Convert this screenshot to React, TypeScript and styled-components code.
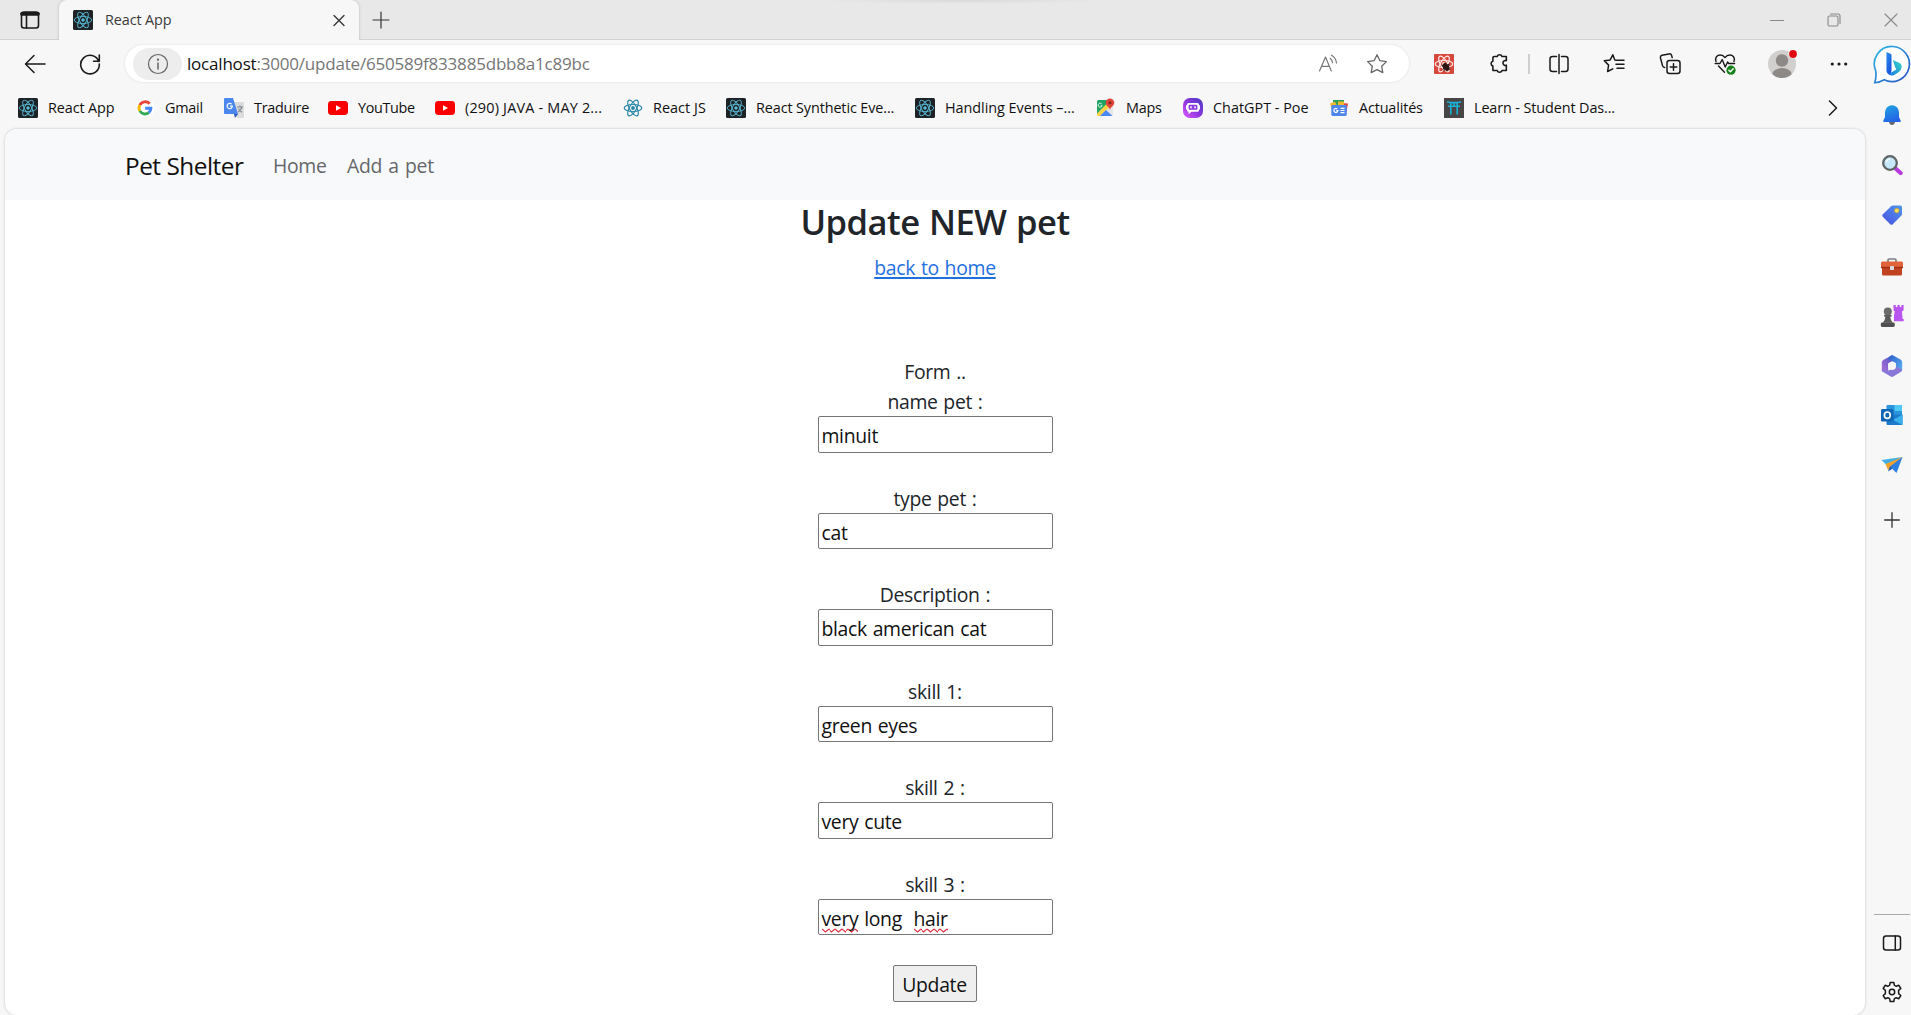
import React from "react";
import styled, { createGlobalStyle, css } from "styled-components";

const GlobalStyle = createGlobalStyle`
  *, *::before, *::after { box-sizing: border-box; }
  html, body { margin: 0; padding: 0; }
  body {
    width: 100vw;
    height: 100vh;
    overflow: hidden;
    background: #f7f7f7;
    font-family: "Open Sans", "Noto Sans", "Liberation Sans", sans-serif;
  }
  svg { display: block; flex: none; }
`;

const Window = styled.div`
  display: flex;
  flex-direction: column;
  width: 100vw;
  height: 100vh;
  background: #f7f7f7;
`;

/* ---------- tab strip ---------- */

const TabStrip = styled.div`
  display: flex;
  align-items: stretch;
  height: 40px;
  flex: none;
  background:
    radial-gradient(ellipse 142px 4px at 962px 0, #d9d9d9, transparent) no-repeat,
    #e8e8e8;
  box-shadow: inset 0 -1px 0 #d3d3d3;
`;

const StripButton = styled.div<{ $w: number; $indent?: number }>`
  display: flex;
  align-items: center;
  justify-content: center;
  width: ${(p) => p.$w}px;
  padding: 0 0 1px ${(p) => p.$indent ?? 0}px;
`;

const Tab = styled.div`
  position: relative;
  display: flex;
  align-items: center;
  width: 300px;
  padding: 0 13px 1px 14px;
  background: #f7f7f7;
  border-radius: 8px 8px 0 0;
  box-shadow: 0 0 3px rgba(0, 0, 0, 0.22);
  clip-path: inset(0 -4px 0 -4px);
`;

const TabTitle = styled.span`
  flex: 1;
  margin-left: 12px;
  font-size: 14.4px;
  letter-spacing: -0.1px;
  color: #3b3b3b;
`;

const WindowButtons = styled.div`
  display: flex;
  margin-left: auto;
`;

/* ---------- frame below the tabs ---------- */

const Frame = styled.div`
  display: flex;
  flex: 1;
  min-height: 0;
`;

const MainColumn = styled.div`
  display: flex;
  flex-direction: column;
  flex: 1;
  min-width: 0;
`;

const Toolbar = styled.div`
  display: flex;
  align-items: center;
  height: 48px;
  padding-bottom: 1px;
  flex: none;
`;

const ToolCell = styled.div<{ $w: number }>`
  display: flex;
  align-items: center;
  justify-content: center;
  width: ${(p) => p.$w}px;
  flex: none;
`;

const AddressBar = styled.div`
  display: flex;
  align-items: center;
  flex: 1;
  height: 37px;
  margin: 0 6px 0 14px;
  padding: 0 14px 0 8px;
  background: #fff;
  border-radius: 19px;
  box-shadow: 0 0 3px rgba(0, 0, 0, 0.1);
`;

const InfoPill = styled.div`
  display: flex;
  align-items: center;
  justify-content: center;
  width: 49px;
  height: 32px;
  border-radius: 16px;
  background: #ededed;
`;

const Url = styled.span`
  flex: 1;
  margin-left: 5px;
  padding-bottom: 1px;
  font-size: 17px;
  letter-spacing: -0.2px;
  color: #767676;
  b { font-weight: 400; color: #111; }
`;

const ToolDivider = styled.div`
  width: 2px;
  height: 20px;
  margin: 0 1px;
  background: #cfcfcf;
`;

const Bookmarks = styled.div`
  display: flex;
  align-items: center;
  height: 41px;
  padding: 0 13px 2px 18px;
  flex: none;
`;

const BookmarkItem = styled.div<{ $w: number; $track: number }>`
  display: flex;
  align-items: center;
  gap: 10px;
  width: ${(p) => p.$w}px;
  flex: none;
  white-space: nowrap;
  font-size: 14.4px;
  letter-spacing: ${(p) => p.$track}px;
  color: #111;
  span { padding-bottom: 1px; }
`;

const MoreBookmarks = styled.div`
  display: flex;
  margin-left: auto;
  padding-right: 14px;
`;

const PageArea = styled.div`
  display: flex;
  flex: 1;
  min-height: 0;
  padding-left: 5px;
`;

const Page = styled.div`
  display: flex;
  flex-direction: column;
  flex: 1;
  overflow: hidden;
  background: #fff;
  border-radius: 12px;
  box-shadow: 0 0 3px rgba(0, 0, 0, 0.22);
`;

/* ---------- page content ---------- */

const Navbar = styled.nav`
  display: flex;
  align-items: center;
  height: 71px;
  flex: none;
  padding: 1px 0 0 120px;
  background: #f8f9fb;
`;

const Brand = styled.span`
  width: 148px;
  font-size: 24.4px;
  letter-spacing: -0.5px;
  color: #111;
`;

const NavLink = styled.span<{ $w: number }>`
  width: ${(p) => p.$w}px;
  padding-top: 1px;
  font-size: 19.4px;
  letter-spacing: -0.3px;
  word-spacing: 1.5px;
  color: #65676a;
`;

const Content = styled.main`
  display: flex;
  flex-direction: column;
  align-items: center;
  color: #212529;
  font-size: 19.4px;
  line-height: 30px;
  letter-spacing: -0.33px;
  word-spacing: 1.1px;
`;

const Heading = styled.h2`
  margin: 0;
  padding-top: 1px;
  height: 53px;
  font-size: 34.5px;
  line-height: 42px;
  font-weight: 600;
  letter-spacing: -0.5px;
`;

const BackLink = styled.span`
  color: #1f6fe0;
  text-decoration: underline;
  text-decoration-thickness: 2px;
  text-underline-offset: 2px;
`;

const FormTitle = styled.div`
  margin-top: 74px;
`;

const Field = styled.label`
  display: flex;
  flex-direction: column;
  align-items: center;
  height: 96.5px;
`;

const FieldLabel = styled.span`
  height: 29px;
`;

const boxed = css`
  border: 1px solid #767676;
  border-radius: 2px;
  color: #111;
`;

const FieldBox = styled.div`
  ${boxed}
  width: 235px;
  height: 36.5px;
  padding: 4px 3px 0;
  background: #fff;
  white-space: pre;
`;

const Misspelt = styled.span`
  display: inline-block;
  height: 29px;
  background: url("data:image/svg+xml,%3Csvg xmlns='http://www.w3.org/2000/svg' width='6.6' height='5' viewBox='0 0 6.6 5'%3E%3Cpath d='M0 1 L3.3 4 L6.6 1' fill='none' stroke='%23e03040' stroke-width='1.1'/%3E%3C/svg%3E") repeat-x 0 100%;
`;

const SubmitButton = styled.div`
  ${boxed}
  width: 84px;
  height: 37px;
  margin: -1px 1px 0 0;
  padding-top: 4px;
  background: #efefef;
  text-align: center;
`;

/* ---------- sidebar ---------- */

const Sidebar = styled.aside`
  display: flex;
  flex-direction: column;
  align-items: center;
  width: 46px;
  flex: none;
  padding: 0 0 0 8px;
`;

const SideCell = styled.div<{ $h: number }>`
  display: flex;
  align-items: center;
  justify-content: center;
  height: ${(p) => p.$h}px;
  flex: none;
`;

const SideFooter = styled.div`
  display: flex;
  flex-direction: column;
  align-items: center;
  width: 36px;
  margin-top: auto;
  padding-top: 2px;
  border-top: 1px solid #a9a9a9;
`;

/* ---------- icons ---------- */

type LineProps = {
  w?: number;
  h?: number;
  color?: string;
  sw?: number;
  box?: string;
  children: React.ReactNode;
};

const Line = ({ w = 20, h = w, color = "#1a1a1a", sw = 1.4, box, children }: LineProps) => (
  <svg
    width={w}
    height={h}
    viewBox={box ?? `0 0 ${w} ${h}`}
    fill="none"
    stroke={color}
    strokeWidth={sw}
    strokeLinecap="round"
    strokeLinejoin="round"
  >
    {children}
  </svg>
);

const Orbits = ({ color, sw = 1 }: { color: string; sw?: number }) => (
  <g fill="none" stroke={color} strokeWidth={sw}>
    <ellipse cx="10" cy="10" rx="8.8" ry="3.5" />
    <ellipse cx="10" cy="10" rx="8.8" ry="3.5" transform="rotate(60 10 10)" />
    <ellipse cx="10" cy="10" rx="8.8" ry="3.5" transform="rotate(120 10 10)" />
    <circle cx="10" cy="10" r="1.3" fill={color} />
  </g>
);

const ReactDark = () => (
  <svg width="20" height="20" viewBox="0 0 20 20">
    <rect width="20" height="20" rx="1.5" fill="#1d2226" />
    <Orbits color="#58b9d3" sw={0.9} />
  </svg>
);

const ReactLight = () => (
  <svg width="20" height="20" viewBox="0 0 20 20">
    <Orbits color="#2b88a6" sw={1.2} />
  </svg>
);

const ReactDebug = () => (
  <svg width="20" height="20" viewBox="0 0 20 20">
    <rect width="20" height="20" rx="1" fill="#d8473c" />
    <Orbits color="#ffe9e4" sw={1.2} />
    <g stroke="#2a1512" strokeWidth="1" strokeLinecap="round">
      <ellipse cx="12" cy="12.8" rx="2.4" ry="3.6" transform="rotate(-40 12 12.8)" fill="#2a1512" />
      <path d="M8 11.5l8 4M10 17l1-8M9 15l6-5M13 17l2-6" />
    </g>
  </svg>
);

const Google = () => (
  <svg width="20" height="20" viewBox="0 0 20 20">
    <circle cx="10" cy="10" r="9.5" fill="#fff" />
    <g fill="none" strokeWidth="2.9">
      <path d="M14.6 5.7A6 6 0 0 0 4.8 7.1" stroke="#ea4335" />
      <path d="M4.8 7.1a6 6 0 0 0 0 5.8" stroke="#fbbc05" />
      <path d="M4.8 12.9a6 6 0 0 0 9 1.7" stroke="#34a853" />
      <path d="M13.8 14.6a6 6 0 0 0 2.1-4.4H10.2" stroke="#4285f4" />
    </g>
  </svg>
);

const Translate = () => (
  <svg width="20" height="20" viewBox="0 0 20 20">
    <path d="M9 4h10a1 1 0 0 1 1 1v14a1 1 0 0 1-1 1h-6z" fill="#dcdcdc" />
    <path d="M13 9h6M16 7.6V9M18 9c-.7 2.6-2.3 4.2-4 5M14.4 10.8c.8 1.6 2 2.7 3.6 3.4" stroke="#7c8791" strokeWidth="1.1" fill="none" />
    <path d="M1 0h8l5 16H1a1 1 0 0 1-1-1V1a1 1 0 0 1 1-1z" fill="#4b87ee" />
    <path d="M10 16h4l-3 4z" fill="#2f5bbd" />
    <path d="M7.6 6.2A2.6 2.6 0 1 0 8.3 8.2H5.9" stroke="#fff" strokeWidth="1.2" fill="none" />
  </svg>
);

const YouTube = () => (
  <svg width="20" height="20" viewBox="0 0 20 20">
    <rect x="0" y="3" width="20" height="14" rx="3.4" fill="#f80000" />
    <path d="M8 7.2v5.6l5-2.8z" fill="#fff" />
  </svg>
);

const Maps = () => (
  <svg width="20" height="20" viewBox="0 0 20 20">
    <clipPath id="maps-tile"><rect x="1" y="2" width="16" height="16" rx="1.5" /></clipPath>
    <g clipPath="url(#maps-tile)">
      <rect x="1" y="2" width="16" height="16" fill="#e6e6e6" />
      <path d="M1 2h12v3L1 17z" fill="#1fa463" />
      <path d="M1 15.5L11.5 5l3 3L4.500 18H1z" fill="#fbd24a" />
      <path d="M4 18l6-6 6.500 6z" fill="#4a89f3" />
    </g>
    <path d="M5.900 6.200a2 2 0 1 0 .2 1.500H4.600" stroke="#fff" strokeWidth=".9" fill="none" />
    <path d="M14 .5a4.300 4.300 0 0 0-4.300 4.300c0 3 3.500 3.700 4.300 7.200.8-3.500 4.300-4.200 4.300-7.200A4.300 4.300 0 0 0 14 .5z" fill="#e0463a" />
    <circle cx="14" cy="4.700" r="1.500" fill="#8c1f16" />
  </svg>
);

const Poe = () => (
  <svg width="20" height="20" viewBox="0 0 20 20">
    <defs>
      <linearGradient id="poe" x1="1" y1="0" x2="0" y2="1">
        <stop offset="0" stopColor="#4a3cc4" />
        <stop offset=".5" stopColor="#8a35dd" />
        <stop offset="1" stopColor="#e05bff" />
      </linearGradient>
    </defs>
    <rect width="20" height="20" rx="7" fill="url(#poe)" />
    <path d="M5.500 5h9a1.500 1.500 0 0 1 1.500 1.500v.8h1v4.200h-1v.8a1.500 1.500 0 0 1-1.500 1.500H8.500L5.500 16.200v-2.400A1.500 1.500 0 0 1 4 12.300v-.8H3V7.300h1v-.8A1.500 1.500 0 0 1 5.500 5z" fill="#fff" />
    <rect x="5.600" y="6.800" width="8.800" height="5" rx="1.200" fill="#8b3be0" />
    <path d="M8 8.300v2M12 8.300v2" stroke="#fff" strokeWidth="1.500" />
  </svg>
);

const News = () => (
  <svg width="20" height="20" viewBox="0 0 20 20">
    <path d="M4 2h11v7H4z" fill="#2f9e58" />
    <path d="M1 5.500l5-1.800 3 6-6 2z" fill="#f2b92c" />
    <path d="M12 5l7 .6-1.500 8L12 12z" fill="#e8453c" />
    <path d="M9 3.500h6v4H9z" fill="#f2b92c" />
    <rect x="2.300" y="7" width="15.500" height="11" rx="1.400" fill="#4f86ec" />
    <path d="M8.300 11a2 2 0 1 0 .6 1.700H7.200M11.500 10.400H15.500M11.500 12.500H15.500M11.500 14.600H15.500" stroke="#fff" strokeWidth="1.200" fill="none" />
  </svg>
);

const Torii = () => (
  <svg width="20" height="20" viewBox="0 0 20 20">
    <rect width="20" height="20" fill="#474545" />
    <path d="M3 4q7 1.200 14 0M4 8.300h12M6.800 4.800V16.500M13.200 4.800V16.500M10 5v3" stroke="#19b1d8" strokeWidth="1.600" fill="none" />
  </svg>
);

const Puzzle = () => (
  <Line w={21} sw={1.5} box="0 0 20 20">
    <path d="M5 3.400h2.800a2.400 2.400 0 0 1 4.600 0h4.100v4a2.200 2.200 0 0 0-3.100 2.700 2.200 2.200 0 0 0 3.100 1.500v5h-4.100a2.400 2.400 0 0 1-4.600 0H3.700v-4.200a2.400 2.400 0 0 1 0-4.600V4.700q0-1.300 1.300-1.300z" />
  </Line>
);

const Heart = () => (
  <Line w={22} h={22} sw={1.4}>
    <path d="M2 8.600C.6 4.500 3.200 2 6.200 2 8.400 2 10 3.200 11 4.600 12 3.200 13.600 2 15.800 2c3 0 5.600 2.500 4.200 6.600M4.500 13l6 6.300" />
    <path d="M1.200 10.500H6l2.200-4 3 7.500 2.400-5 1 1.500h6" />
    <circle cx="17" cy="17.200" r="4.600" fill="#14801a" stroke="none" />
    <path d="M14.900 17.300l1.500 1.500 2.800-3" stroke="#fff" />
  </Line>
);

const Avatar = () => (
  <svg width="30" height="30" viewBox="0 0 30 30" overflow="visible">
    <clipPath id="avatar"><circle cx="15" cy="15" r="14" /></clipPath>
    <circle cx="15" cy="15" r="14" fill="#d2d0ce" />
    <g clipPath="url(#avatar)" fill="#8c8987">
      <circle cx="15" cy="11.500" r="6.200" />
      <ellipse cx="15" cy="26" rx="10" ry="7" />
    </g>
    <circle cx="26" cy="5" r="4.600" fill="#f7f7f7" />
    <circle cx="26" cy="5" r="3.900" fill="#e00b12" />
  </svg>
);

const Bing = () => (
  <svg width="38" height="39" viewBox="0 0 38 40">
    <defs>
      <linearGradient id="bing-ring" x1="0" y1="0" x2="1" y2="1">
        <stop offset="0" stopColor="#29b9e6" />
        <stop offset="1" stopColor="#2a50c4" />
      </linearGradient>
      <linearGradient id="bing-b" x1="0" y1="0" x2=".6" y2="1">
        <stop offset="0" stopColor="#2a8ff0" />
        <stop offset="1" stopColor="#1a52d8" />
      </linearGradient>
      <linearGradient id="bing-bowl" x1="1" y1="0" x2="0" y2="1">
        <stop offset="0" stopColor="#35dcc0" />
        <stop offset="1" stopColor="#1c74ea" />
      </linearGradient>
    </defs>
    <path d="M19.500 1.500a18 18 0 1 1-8.500 34.200Q6 38.600 1.300 38.700 3.200 33 2.300 26.500A18 18 0 0 1 19.500 1.500z" fill="#fff" stroke="url(#bing-ring)" strokeWidth="1.700" />
    <path d="M13.300 7.300l4.200 1.600q1 .4 1 1.500v15.500l-1 4.500q-4.200-.3-4.200-4.400z" fill="url(#bing-b)" />
    <path d="M19.800 15.500l6.400 2.600q3 1.300 2.700 5-.5 3.500-3.500 5.200l-4.200 2.500q-3.400 1.400-6-.8l8.200-4.900-1.500-3.300z" fill="url(#bing-bowl)" />
  </svg>
);

const Bell = () => (
  <svg width="20" height="20" viewBox="0 0 20 20">
    <defs>
      <linearGradient id="bell" x1="0" y1="0" x2=".4" y2="1">
        <stop offset="0" stopColor="#20a5e2" /><stop offset="1" stopColor="#2465e6" />
      </linearGradient>
    </defs>
    <path d="M7 17h6q-.5 3-3 3t-3-3z" fill="#686868" />
    <path d="M10 .3A7 7 0 0 1 17 7v5l1.800 4q.2 1-.8 1H2q-1 0-.8-1L3 12V7A7 7 0 0 1 10 .3z" fill="url(#bell)" />
  </svg>
);

const Magnifier = () => (
  <svg width="22" height="22" viewBox="0 0 22 22">
    <path d="M14 14l5.600 5" stroke="#b93be0" strokeWidth="4.200" strokeLinecap="round" />
    <circle cx="9" cy="9" r="6.800" fill="#c6e8f8" stroke="#5f6467" strokeWidth="2.300" />
    <path d="M5.500 8q.8-2.700 3.500-3" stroke="#fff" strokeWidth="1.200" fill="none" />
  </svg>
);

const Tag = () => (
  <svg width="22" height="22" viewBox="0 0 22 22">
    <defs>
      <linearGradient id="tag" x1="1" y1="0" x2="0" y2="1">
        <stop offset="0" stopColor="#4e97ee" /><stop offset="1" stopColor="#4a4fe0" />
      </linearGradient>
    </defs>
    <path d="M12 1.500h7.500q1.500 0 1.500 1.500v7q0 1-.8 1.800l-8.400 8.400q-1.300 1.200-2.600 0l-7.400-7.400q-1.200-1.300 0-2.500L10.200 2.200q.8-.7 1.800-.7z" fill="url(#tag)" />
    <circle cx="15.800" cy="6.600" r="2.300" fill="#f8df62" stroke="#c59d30" strokeWidth=".8" />
  </svg>
);

const Toolbox = () => (
  <svg width="24" height="20" viewBox="0 0 24 20">
    <path d="M8 5V3.200Q8 2 9.200 2h5.600Q16 2 16 3.200V5" fill="none" stroke="#7c7f82" strokeWidth="1.700" />
    <rect x="1" y="4.500" width="22" height="6.500" rx="1.500" fill="#e0633a" />
    <path d="M2 10.500h20V17q0 1.500-1.500 1.500h-17Q2 18.500 2 17z" fill="#c14220" />
    <rect x="1" y="9.800" width="22" height="1.400" fill="#9b3018" />
    <rect x="10" y="9" width="4" height="4" rx=".8" fill="#d8dde0" />
  </svg>
);

const Chess = () => (
  <svg width="24" height="24" viewBox="0 0 24 24">
    <path d="M13.500 1h2.300v2h1.600V1h2.400v2h1.600V1h2.200v5.200l-1.700 1.200.8 7.600h1v2.300H14v-6l.8-3.900-1.300-1z" fill="#b955f0" />
    <circle cx="7.800" cy="7.600" r="4" fill="#6b6b6b" />
    <path d="M4 11h7.600v1.600h-1.400q.2 4 2.600 6.200H2.800q2.400-2.200 2.600-6.200H4z" fill="#5a5a5a" />
    <rect x=".8" y="18.500" width="14" height="4.500" rx="1.400" fill="#505050" />
  </svg>
);

const M365 = () => (
  <svg width="22" height="24" viewBox="0 0 22 24">
    <defs>
      <linearGradient id="m1" x1="0" y1="1" x2="1" y2="0">
        <stop offset="0" stopColor="#b36fd8" /><stop offset="1" stopColor="#4a54c4" />
      </linearGradient>
      <linearGradient id="m2" x1="0" y1="0" x2="1" y2="1">
        <stop offset="0" stopColor="#2b5cc8" /><stop offset="1" stopColor="#5cb2f4" />
      </linearGradient>
    </defs>
    <path d="M11 1.200L2.200 6Q.8 7 .8 8.600V16l6.400 3.200V9.600L14 5.400z" fill="url(#m1)" />
    <path d="M8.500 2.500L11.300 1l8.200 4.600q1.700 1 1.700 3v8l-6.400-3.200V9L7.200 5z" fill="url(#m2)" />
    <path d="M21.200 15.500q0 1.700-1.500 2.600L12.300 22.500q-1.300.8-2.600 0L.8 17.200V15l6.400 1.800 7.600-4.500z" fill="#8a78d8" />
    <circle cx="11" cy="12" r="4" fill="#f7f7f7" />
  </svg>
);

const Outlook = () => (
  <svg width="22" height="22" viewBox="0 0 22 22">
    <rect x="5.500" y="1" width="15.500" height="13" rx="1" fill="#2a94dc" />
    <path d="M13.500 1H20q1 0 1 1v5h-7.500z" fill="#50c7f5" />
    <path d="M5.500 10.500h16V20q0 1-1 1h-14q-1 0-1-1z" fill="#1d7bcb" />
    <path d="M21.500 10.500V21L12 16z" fill="#39b2ec" />
    <rect x="0" y="5" width="12.500" height="12.500" rx="1.200" fill="#1067b8" />
    <ellipse cx="6.300" cy="11.200" rx="2.900" ry="3.200" fill="none" stroke="#fff" strokeWidth="1.700" />
  </svg>
);

const Plane = () => (
  <svg width="22" height="18" viewBox="0 0 22 18">
    <path d="M21.500 1L.5 4l6 6z" fill="#41b0ea" />
    <path d="M21.500 1L4.500 8l2.500 6 3-2z" fill="#f0a22c" />
    <path d="M21.500 1L9 10.500l6.500 6.500z" fill="#2c7fe0" />
    <path d="M9 10.500L7 15.500l4.500-2.700z" fill="#1b5ab8" />
  </svg>
);

const Gear = () => (
  <Line w={22} sw={1.5} box="0 0 22 22">
    <circle cx="11" cy="11" r="2.700" />
    <path d="M9.200 1.500h3.600l.6 2.900q.9.300 1.700.9l2.800-1 1.900 3.200-2.200 1.900v3.200l2.200 1.900-1.900 3.200-2.800-1q-.8.600-1.700.9l-.6 2.900H9.200l-.6-2.900q-.9-.3-1.700-.9l-2.800 1-1.900-3.200 2.200-1.900V9.400L2.200 7.500l1.900-3.200 2.800 1q.8-.6 1.700-.9z" />
  </Line>
);

const Collections = () => (
  <Line w={22} sw={1.5}>
    <rect x="8" y="7.500" width="13" height="13" rx="2.500" />
    <path d="M14.500 10.700v6.600M11.200 14h6.600M5.700 14.500q-1.700-.1-2.200-1.900L1.500 5q-.5-2.100 1.500-2.700L10 .9q2-.4 2.600 1.500l.6 2.200" />
  </Line>
);

const bookmarks: { title: string; w: number; track?: number; Icon: React.FC }[] = [
  { title: "React App", w: 117, Icon: ReactDark },
  { title: "Gmail", w: 89, track: -0.25, Icon: Google },
  { title: "Traduire", w: 104, track: -0.25, Icon: Translate },
  { title: "YouTube", w: 107, track: -0.35, Icon: YouTube },
  { title: "(290) JAVA - MAY 2...", w: 188, track: 0.2, Icon: YouTube },
  { title: "React JS", w: 103, track: 0.05, Icon: ReactLight },
  { title: "React Synthetic Eve...", w: 189, Icon: ReactDark },
  { title: "Handling Events –...", w: 181, track: -0.03, Icon: ReactDark },
  { title: "Maps", w: 87, track: -0.25, Icon: Maps },
  { title: "ChatGPT - Poe", w: 146, track: 0, Icon: Poe },
  { title: "Actualités", w: 115, track: -0.15, Icon: News },
  { title: "Learn - Student Das...", w: 180, Icon: Torii },
];

const fields: { label: string; value: React.ReactNode }[] = [
  { label: "name pet :", value: "minuit" },
  { label: "type pet :", value: "cat" },
  { label: "Description :", value: "black american cat" },
  { label: "skill 1:", value: "green eyes" },
  { label: "skill 2 :", value: "very cute" },
  {
    label: "skill 3 :",
    value: (
      <>
        <Misspelt>very</Misspelt>
        {" long  "}
        <Misspelt>hair</Misspelt>
      </>
    ),
  },
];

const sideIcons: { h: number; Icon: React.FC }[] = [
  { h: 48, Icon: Bing },
  { h: 54, Icon: Bell },
  { h: 45, Icon: Magnifier },
  { h: 56, Icon: Tag },
  { h: 47, Icon: Toolbox },
  { h: 51, Icon: Chess },
  { h: 49, Icon: M365 },
  { h: 50, Icon: Outlook },
  { h: 50, Icon: Plane },
];

export default function App() {
  return (
    <>
      <GlobalStyle />
      <Window>
        <TabStrip>
          <StripButton $w={59}>
            <Line w={20} sw={1.6}>
              <rect x="1.500" y="2" width="17" height="16" rx="2.500" />
              <path d="M2 3.800h16" strokeWidth="3.800" />
              <path d="M6.500 5v13" />
            </Line>
          </StripButton>
          <Tab>
            <ReactDark />
            <TabTitle>React App</TabTitle>
            <Line w={14} sw={1.3} color="#333"><path d="M2 2.500l10 10M12 2.500l-10 10" /></Line>
          </Tab>
          <StripButton $w={43}>
            <Line w={18} sw={1.2} color="#333"><path d="M9 1v16M1 9h16" /></Line>
          </StripButton>
          <WindowButtons>
            <StripButton $w={57}>
              <Line w={14} sw={1} color="#888"><path d="M.5 7.500h13" /></Line>
            </StripButton>
            <StripButton $w={57}>
              <Line w={14} sw={1.1} color="#888">
                <rect x="1" y="3" width="10" height="10" rx="1.500" />
                <path d="M3.500 1h7.500q2 0 2 2v7.500" />
              </Line>
            </StripButton>
            <StripButton $w={49} $indent={9}>
              <Line w={14} sw={1.1} color="#888"><path d="M1 1l12 12M13 1L1 13" /></Line>
            </StripButton>
          </WindowButtons>
        </TabStrip>

        <Frame>
          <MainColumn>
            <Toolbar>
              <ToolCell $w={69}>
                <Line w={22} h={20} sw={1.5}><path d="M21 10H2M10 1.500L1.500 10l8.500 8.500" /></Line>
              </ToolCell>
              <ToolCell $w={42}>
                <Line w={22} sw={1.6}>
                  <path d="M19.800 8.500A9.300 9.300 0 1 0 20.300 11M20.300 2v6.300H14.500" />
                </Line>
              </ToolCell>
              <AddressBar>
                <InfoPill>
                  <Line w={22} sw={1.2} color="#666">
                    <circle cx="11" cy="11" r="9.500" />
                    <path d="M11 10v6" strokeWidth="1.500" />
                    <circle cx="11" cy="6.600" r=".6" fill="#666" />
                  </Line>
                </InfoPill>
                <Url><b>localhost</b>:3000/update/650589f833885dbb8a1c89bc</Url>
                <ToolCell $w={62}>
                  <Line w={20} sw={1.2} color="#777">
                    <path d="M1.500 17L7.500 3l5.800 14M3.600 12.300h7.700M12.300 4.500q2 1.500 2.200 4.200M13.500 1.200q4.500 2.500 5 7.800" />
                  </Line>
                </ToolCell>
                <ToolCell $w={36}>
                  <Line w={22} sw={1.3} color="#666">
                    <path d="M11 1.800l2.900 5.900 6.500.9-4.700 4.600 1.100 6.400-5.800-3-5.800 3 1.100-6.400L1.600 8.600l6.500-.9z" />
                  </Line>
                </ToolCell>
              </AddressBar>
              <ToolCell $w={57}><ReactDebug /></ToolCell>
              <ToolCell $w={55}><Puzzle /></ToolCell>
              <ToolDivider />
              <ToolCell $w={55}>
                <Line w={22} sw={1.5}>
                  <path d="M8.500 3.500H4.500Q2 3.500 2 6v10q0 2.500 2.500 2.500h4M13.500 3.500h4Q20 3.500 20 6v10q0 2.500-2.500 2.500h-4M11 1.500v19" />
                </Line>
              </ToolCell>
              <ToolCell $w={56}>
                <Line w={22} sw={1.5}>
                  <path d="M13.500 7.200l-1.700-.3L9.800 1.800 7.200 6.900 1.300 7.800l4.300 4.300-1 6.400 5.200-2.700M14.500 7.200h6.500M13 11.200h8M14 15.300h7" />
                </Line>
              </ToolCell>
              <ToolCell $w={55}><Collections /></ToolCell>
              <ToolCell $w={55}><Heart /></ToolCell>
              <ToolCell $w={60}><Avatar /></ToolCell>
              <ToolCell $w={53}>
                <svg width="18" height="6" viewBox="0 0 18 6" fill="#1a1a1a">
                  <circle cx="2.300" cy="3" r="1.600" /><circle cx="9" cy="3" r="1.600" /><circle cx="15.700" cy="3" r="1.600" />
                </svg>
              </ToolCell>
            </Toolbar>

            <Bookmarks>
              {bookmarks.map(({ title, w, track, Icon }, i) => (
                <BookmarkItem key={i} $w={w} $track={track ?? -0.11}>
                  <Icon />
                  <span>{title}</span>
                </BookmarkItem>
              ))}
              <MoreBookmarks>
                <Line w={10} h={16} sw={1.5}><path d="M1.500 1l7 7-7 7" /></Line>
              </MoreBookmarks>
            </Bookmarks>

            <PageArea>
              <Page>
                <Navbar>
                  <Brand>Pet Shelter</Brand>
                  <NavLink $w={74}>Home</NavLink>
                  <NavLink $w={110}>Add a pet</NavLink>
                </Navbar>
                <Content>
                  <Heading>Update NEW pet</Heading>
                  <BackLink>back to home</BackLink>
                  <FormTitle>Form ..</FormTitle>
                  {fields.map((f) => (
                    <Field key={f.label}>
                      <FieldLabel>{f.label}</FieldLabel>
                      <FieldBox>{f.value}</FieldBox>
                    </Field>
                  ))}
                  <SubmitButton>Update</SubmitButton>
                </Content>
              </Page>
            </PageArea>
          </MainColumn>

          <Sidebar>
            {sideIcons.map(({ h, Icon }, i) => (
              <SideCell key={i} $h={h}><Icon /></SideCell>
            ))}
            <SideCell $h={59}>
              <Line w={16} sw={1.3} color="#333"><path d="M8 .7v14.600M.7 8h14.600" /></Line>
            </SideCell>
            <SideFooter>
              <SideCell $h={52}>
                <Line w={20} sw={1.5}>
                  <rect x="1.500" y="3" width="17" height="14" rx="2.500" />
                  <path d="M13.300 3v14" />
                </Line>
              </SideCell>
              <SideCell $h={46}><Gear /></SideCell>
            </SideFooter>
          </Sidebar>
        </Frame>
      </Window>
    </>
  );
}
